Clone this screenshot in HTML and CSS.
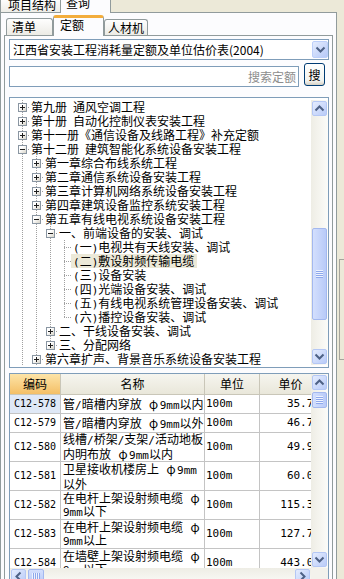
FILE: index.html
```html
<!DOCTYPE html>
<html lang="zh">
<head>
    <meta charset="UTF-8">
    <meta name="viewport" content="width=device-width, initial-scale=1.0">
    <title>定额查询</title>
    <link rel="stylesheet" href="styles.css">
</head>
<body>
<div class="app">
    <div class="main">
        <div class="top-tabs">
            <div class="top-tab">项目结构</div>
            <div class="top-tab active">查询</div>
        </div>

        <div class="outer-panel">
            <div class="sub-tabs">
                <div class="sub-tab">清单</div>
                <div class="sub-tab active">定额</div>
                <div class="sub-tab small">人材机</div>
            </div>

            <div class="inner-panel">
                <div class="combo">
                    <span class="combo-text">江西省安装工程消耗量定额及单位估价表(2004)</span>
                    <span class="combo-btn">
                        <svg viewBox="0 0 13 13"><path d="M2.5 4.5 L6.5 8.5 L10.5 4.5" fill="none" stroke="#4d6185" stroke-width="2"/></svg>
                    </span>
                </div>

                <div class="search-row">
                    <div class="search-input">搜索定额</div>
                    <button class="search-btn">搜</button>
                </div>

                <div class="tree">
                    <div class="tree-rows">
                        <div class="node"><span class="joint"><i class="box plus"></i></span><span class="label">第九册&ensp;通风空调工程</span></div>
                        <div class="node"><span class="joint"><i class="box plus"></i></span><span class="label">第十册&ensp;自动化控制仪表安装工程</span></div>
                        <div class="node"><span class="joint"><i class="box plus"></i></span><span class="label">第十一册《通信设备及线路工程》补充定额</span></div>
                        <div class="node"><span class="joint"><i class="box minus"></i></span><span class="label">第十二册&ensp;建筑智能化系统设备安装工程</span></div>
                        <div class="node"><span class="guide line"></span><span class="joint"><i class="box plus"></i></span><span class="label">第一章综合布线系统工程</span></div>
                        <div class="node"><span class="guide line"></span><span class="joint"><i class="box plus"></i></span><span class="label">第二章通信系统设备安装工程</span></div>
                        <div class="node"><span class="guide line"></span><span class="joint"><i class="box plus"></i></span><span class="label">第三章计算机网络系统设备安装工程</span></div>
                        <div class="node"><span class="guide line"></span><span class="joint"><i class="box plus"></i></span><span class="label">第四章建筑设备监控系统安装工程</span></div>
                        <div class="node"><span class="guide line"></span><span class="joint"><i class="box minus"></i></span><span class="label">第五章有线电视系统设备安装工程</span></div>
                        <div class="node"><span class="guide line"></span><span class="guide line"></span><span class="joint"><i class="box minus"></i></span><span class="label">一、前端设备的安装、调试</span></div>
                        <div class="node"><span class="guide line"></span><span class="guide line"></span><span class="guide line"></span><span class="joint"></span><span class="label"><span class="asc">(</span>一<span class="asc">)</span>电视共有天线安装、调试</span></div>
                        <div class="node"><span class="guide line"></span><span class="guide line"></span><span class="guide line"></span><span class="joint"></span><span class="label selected"><span class="asc">(</span>二<span class="asc">)</span>敷设射频传输电缆</span></div>
                        <div class="node"><span class="guide line"></span><span class="guide line"></span><span class="guide line"></span><span class="joint"></span><span class="label"><span class="asc">(</span>三<span class="asc">)</span>设备安装</span></div>
                        <div class="node"><span class="guide line"></span><span class="guide line"></span><span class="guide line"></span><span class="joint"></span><span class="label"><span class="asc">(</span>四<span class="asc">)</span>光端设备安装、调试</span></div>
                        <div class="node"><span class="guide line"></span><span class="guide line"></span><span class="guide line"></span><span class="joint"></span><span class="label"><span class="asc">(</span>五<span class="asc">)</span>有线电视系统管理设备安装、调试</span></div>
                        <div class="node"><span class="guide line"></span><span class="guide line"></span><span class="guide line"></span><span class="joint last"></span><span class="label"><span class="asc">(</span>六<span class="asc">)</span>播控设备安装、调试</span></div>
                        <div class="node"><span class="guide line"></span><span class="guide line"></span><span class="joint"><i class="box plus"></i></span><span class="label">二、干线设备安装、调试</span></div>
                        <div class="node"><span class="guide line"></span><span class="guide line"></span><span class="joint last"><i class="box plus"></i></span><span class="label">三、分配网络</span></div>
                        <div class="node"><span class="guide line"></span><span class="joint"><i class="box plus"></i></span><span class="label">第六章扩声、背景音乐系统设备安装工程</span></div>
                    </div>
                    <div class="vscroll">
                        <span class="sb-btn"><svg viewBox="0 0 13 13"><path d="M2.5 8.5 L6.5 4.5 L10.5 8.5" fill="none" stroke="#4d6185" stroke-width="2"/></svg></span>
                        <div class="sb-track"><div class="sb-thumb"><span class="grip"></span></div></div>
                        <span class="sb-btn"><svg viewBox="0 0 13 13"><path d="M2.5 4.5 L6.5 8.5 L10.5 4.5" fill="none" stroke="#4d6185" stroke-width="2"/></svg></span>
                    </div>
                </div>

                <div class="grid">
                    <div class="grid-data">
                        <div class="grid-table">
                            <div class="cell head sorted">编码</div>
                            <div class="cell head">名称</div>
                            <div class="cell head">单位</div>
                            <div class="cell head">单价</div>

                            <div class="cell code current">C12-578</div>
                            <div class="cell name"><span>管<span class="asc">/</span>暗槽内穿放&ensp;<span class="phi">φ</span><span class="asc">9mm</span>以内</span></div>
                            <div class="cell unit">100m</div>
                            <div class="cell price">35.75</div>

                            <div class="cell code">C12-579</div>
                            <div class="cell name"><span>管<span class="asc">/</span>暗槽内穿放&ensp;<span class="phi">φ</span><span class="asc">9mm</span>以外</span></div>
                            <div class="cell unit">100m</div>
                            <div class="cell price">46.75</div>

                            <div class="cell code">C12-580</div>
                            <div class="cell name"><span>线槽<span class="asc">/</span>桥架<span class="asc">/</span>支架<span class="asc">/</span>活动地板<br>内明布放&ensp;<span class="phi">φ</span><span class="asc">9mm</span>以内</span></div>
                            <div class="cell unit">100m</div>
                            <div class="cell price">49.93</div>

                            <div class="cell code">C12-581</div>
                            <div class="cell name"><span>卫星接收机楼房上&ensp;<span class="phi">φ</span><span class="asc">9mm</span><br>以外</span></div>
                            <div class="cell unit">100m</div>
                            <div class="cell price">60.06</div>

                            <div class="cell code">C12-582</div>
                            <div class="cell name"><span>在电杆上架设射频电缆&ensp;<span class="phi">φ</span><br><span class="asc">9mm</span>以下</span></div>
                            <div class="cell unit">100m</div>
                            <div class="cell price">115.36</div>

                            <div class="cell code">C12-583</div>
                            <div class="cell name"><span>在电杆上架设射频电缆&ensp;<span class="phi">φ</span><br><span class="asc">9mm</span>以上</span></div>
                            <div class="cell unit">100m</div>
                            <div class="cell price">127.70</div>

                            <div class="cell code">C12-584</div>
                            <div class="cell name"><span>在墙壁上架设射频电缆&ensp;<span class="phi">φ</span><br><span class="asc">9mm</span>以下</span></div>
                            <div class="cell unit">100m</div>
                            <div class="cell price">443.02</div>
                        </div>
                    </div>
                    <div class="vscroll">
                        <span class="sb-btn"><svg viewBox="0 0 13 13"><path d="M2.5 8.5 L6.5 4.5 L10.5 8.5" fill="none" stroke="#4d6185" stroke-width="2"/></svg></span>
                        <div class="sb-track"><div class="sb-thumb"><span class="grip"></span></div></div>
                        <span class="sb-btn"><svg viewBox="0 0 13 13"><path d="M2.5 4.5 L6.5 8.5 L10.5 4.5" fill="none" stroke="#4d6185" stroke-width="2"/></svg></span>
                    </div>
                    <div class="hscroll">
                        <span class="sb-btn"><svg viewBox="0 0 13 13"><path d="M8.5 2.5 L4.5 6.5 L8.5 10.5" fill="none" stroke="#4d6185" stroke-width="2"/></svg></span>
                        <div class="sb-track"><div class="h-thumb"><span class="grip"></span></div></div>
                        <span class="sb-btn"><svg viewBox="0 0 13 13"><path d="M4.5 2.5 L8.5 6.5 L4.5 10.5" fill="none" stroke="#4d6185" stroke-width="2"/></svg></span>
                    </div>
                    <div class="corner"></div>
                </div>
            </div>
        </div>
    </div>

    <div class="side">
        <div class="side-box"></div>
    </div>
</div>
</body>
</html>
```

FILE: styles.css
```css
* {
    margin: 0;
    padding: 0;
    box-sizing: border-box;
}

body {
    width: 344px;
    height: 579px;
    overflow: hidden;
    background-color: #ece9d8;
    font-family: "Noto Sans CJK SC", sans-serif;
    font-size: 12px;
    color: #000;
}

.app {
    display: flex;
    height: 100%;
}

.main {
    width: 337px;
    flex-shrink: 0;
}

.side {
    flex: 1;
    padding: 259px 0 0 2px;
}

.side-box {
    height: 101px;
    border: 1px solid #a5a49c;
    border-right: none;
}

/* top tabs, cut at the top edge */
.top-tabs {
    display: flex;
    height: 12px;
}

.top-tab {
    width: 61px;
    height: 12px;
    padding-left: 7px;
    line-height: 10px;
    white-space: nowrap;
    border-left: 1px solid #919b9c;
    border-right: 1px solid #919b9c;
    background: linear-gradient(#fdfdfc, #eeede7);
}

.top-tab.active {
    width: 50px;
    height: 13px;
    padding-left: 5px;
    line-height: 6px;
    border-left: none;
    background: #fcfcfe;
    position: relative;
    z-index: 1;
}

.outer-panel {
    height: 567px;
    border: 1px solid #919b9c;
    border-bottom: none;
    background: #fcfcfe;
}

/* sub tabs */
.sub-tabs {
    display: flex;
    align-items: flex-end;
    height: 22px;
    padding-left: 5px;
}

.sub-tab {
    width: 47px;
    height: 17px;
    padding-left: 5px;
    line-height: 16px;
    white-space: nowrap;
    border: 1px solid #919b9c;
    border-bottom: none;
    border-radius: 3px 3px 0 0;
    background: linear-gradient(#fefefe, #ecebe5);
}

.sub-tab.active {
    width: 51px;
    height: 21px;
    margin-bottom: -1px;
    padding-left: 6px;
    line-height: 14px;
    border-top: 3px solid #f3ad3c;
    background: #fcfcfe;
    position: relative;
    z-index: 1;
}

.sub-tab.small {
    width: 44px;
    height: 16px;
    padding-left: 3px;
    line-height: 15px;
}

.inner-panel {
    height: 545px;
    margin: 0 3px;
    padding: 3px 3px 0 4px;
    border: 1px solid #919b9c;
    border-bottom: none;
    background: #fcfcfe;
}

/* combo box */
.combo {
    display: flex;
    height: 21px;
    padding: 1px 0 1px 1px;
    border: 1px solid #7f9db9;
    background: #fff;
}

.combo-text {
    flex: 1;
    padding-left: 2px;
    line-height: 17px;
    white-space: nowrap;
    overflow: hidden;
}

.combo-btn {
    width: 16px;
    display: flex;
    align-items: center;
    justify-content: center;
    border: 1px solid #bccffa;
    border-radius: 2px;
    background: linear-gradient(135deg, #e4ecfe, #b6c9f7);
}

.combo-btn svg {
    width: 13px;
    height: 13px;
}

/* search */
.search-row {
    display: flex;
    align-items: flex-start;
    margin-top: 3px;
}

.search-input {
    width: 290px;
    height: 21px;
    margin-top: 3px;
    padding-right: 2px;
    border: 1px solid #7f9db9;
    background: #fff;
    text-align: right;
    line-height: 19px;
    color: #8d8d8d;
}

.search-btn {
    width: 21px;
    height: 23px;
    margin-left: 5px;
    border: 1px solid #003c74;
    border-radius: 3px;
    background: linear-gradient(#ffffff, #f3f3ef 80%, #d6d0c4);
    font-family: inherit;
    font-size: 12px;
    line-height: 19px;
    color: #000;
}

/* tree */
.tree {
    display: flex;
    height: 271px;
    margin-top: 10px;
    padding: 2px 0 2px 2px;
    border: 1px solid #7f9db9;
    background: #fff;
}

.tree-rows {
    flex: 1;
    overflow: hidden;
    padding-left: 3px;
}

.node {
    display: flex;
    height: 14px;
}

.guide,
.joint {
    width: 14px;
    height: 14px;
    flex-shrink: 0;
}

.guide.line {
    background: repeating-linear-gradient(to bottom, #a0a0a0 0 1px, transparent 1px 2px) 7px 0 / 1px 14px no-repeat;
}

.joint {
    padding: 3px 0 0 3px;
    background:
        repeating-linear-gradient(to bottom, #a0a0a0 0 1px, transparent 1px 2px) 7px 0 / 1px 14px no-repeat,
        repeating-linear-gradient(to right, #a0a0a0 0 1px, transparent 1px 2px) 7px 7px / 7px 1px no-repeat;
}

.joint.last {
    background-size: 1px 8px, 7px 1px;
}

.box {
    display: block;
    width: 9px;
    height: 9px;
    border: 1px solid #8a96a2;
}

.box.plus {
    background:
        linear-gradient(#1e1e1e, #1e1e1e) center / 5px 1px no-repeat,
        linear-gradient(#1e1e1e, #1e1e1e) center / 1px 5px no-repeat,
        linear-gradient(135deg, #ffffff 35%, #d8d4c8);
}

.box.minus {
    background:
        linear-gradient(#1e1e1e, #1e1e1e) center / 5px 1px no-repeat,
        linear-gradient(135deg, #ffffff 35%, #d8d4c8);
}

.label {
    padding: 0 3px 0 2px;
    line-height: 14px;
    white-space: nowrap;
}

.label.selected {
    background: #ece9d8;
}

.asc {
    font-family: "DejaVu Sans Mono", monospace;
    font-size: 11px;
    line-height: 12px;
}

/* scrollbars */
.vscroll {
    display: flex;
    flex-direction: column;
    width: 17px;
    background: linear-gradient(to right, #eeede5, #fcfcf9);
}

.hscroll {
    display: flex;
    background: linear-gradient(#eeede5, #fcfcf9);
}

.sb-btn {
    display: flex;
    align-items: center;
    justify-content: center;
    flex-shrink: 0;
    width: 15px;
    height: 15px;
    margin: 1px;
    border: 1px solid #b4c7f5;
    border-radius: 2px;
    background: linear-gradient(135deg, #e4ecfe, #b9cbf8);
}

.sb-btn svg {
    width: 13px;
    height: 13px;
}

.sb-track {
    flex: 1;
    display: flex;
    flex-direction: column;
}

.hscroll .sb-track {
    flex-direction: row;
}

.sb-thumb,
.h-thumb {
    display: flex;
    align-items: center;
    justify-content: center;
    border: 1px solid #a3b8ef;
    border-radius: 2px;
}

.sb-thumb {
    width: 15px;
    margin: 0 1px;
    background: linear-gradient(to right, #d3dffd, #b8caf8);
}

.tree .sb-thumb {
    margin-top: 111px;
    height: 92px;
}

.grid .sb-thumb {
    margin-top: 1px;
    height: 16px;
}

.h-thumb {
    width: 16px;
    height: 15px;
    margin: 1px 0 0 1px;
    background: linear-gradient(#d3dffd, #b8caf8);
}

.grip {
    width: 7px;
    height: 8px;
    background: repeating-linear-gradient(to bottom, #eef3fe 0 1px, #8ea8ec 1px 2px);
}

.h-thumb .grip {
    width: 8px;
    height: 7px;
    background: repeating-linear-gradient(to right, #eef3fe 0 1px, #8ea8ec 1px 2px);
}

/* grid */
.grid {
    display: grid;
    grid-template-columns: minmax(0, 1fr) 17px;
    grid-template-rows: 194px 17px;
    height: 213px;
    margin-top: 5px;
    border: 1px solid #7f9db9;
    background: #fff;
}

.grid-data {
    overflow: hidden;
}

.grid-table {
    display: grid;
    grid-template-columns: 51px 144px 55px 62px;
    grid-template-rows: 21px 19px 19px 29px 29px 29px 29px 29px;
    width: 312px;
}

.cell {
    display: flex;
    align-items: center;
    overflow: hidden;
    white-space: nowrap;
    border-right: 1px solid #c4c4c4;
    border-bottom: 1px solid #c4c4c4;
}

.head {
    justify-content: center;
    line-height: 14px;
    border-color: #c9c6b8;
    background: linear-gradient(#f6f5ef, #e9e7da);
}

.head.sorted {
    background: linear-gradient(#fde4a8, #f4bf66);
}

.code,
.unit,
.price {
    font-family: "DejaVu Sans Mono", monospace;
    font-size: 11px;
    line-height: 12px;
}

.code {
    justify-content: center;
    font-size: 10px;
}

.code.current {
    background: #dfe8f6;
}

.name {
    padding-left: 2px;
    line-height: 13px;
}

.phi {
    display: inline-block;
    width: 12px;
    text-align: center;
}

.unit {
    padding-left: 1px;
}

.price {
    justify-content: flex-end;
    padding-right: 1px;
}

.corner {
    background: #f3f2ec;
}
```
